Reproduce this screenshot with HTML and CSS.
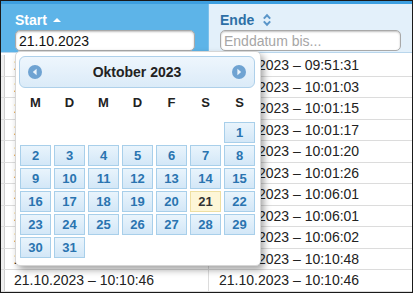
FILE: index.html
```html
<!DOCTYPE html>
<html lang="de">
<head>
<meta charset="utf-8">
<link rel="stylesheet" href="styles.css">
</head>
<body>
<div class="frame">
  <div class="thead">
    <div class="th th-sorted">
      <div class="th-title">Start <span class="sort-up"></span></div>
      <input class="filter" type="text" value="21.10.2023">
    </div>
    <div class="th th-plain">
      <div class="th-title">Ende
        <svg class="sort-both" width="10" height="14" viewBox="0 0 10 14"><path d="M1.8 5.6 L5 2.2 L8.2 5.6" fill="none" stroke="#5b96c9" stroke-width="2"/><path d="M1.8 8.4 L5 11.8 L8.2 8.4" fill="none" stroke="#5b96c9" stroke-width="2"/></svg>
      </div>
      <input class="filter" type="text" placeholder="Enddatum bis...">
    </div>
  </div>
  <div class="tbody">
    <div class="tr"><div class="td c1">21.10.2023 – 09:51:31</div><div class="td c2">21.10.2023 – 09:51:31</div></div>
    <div class="tr"><div class="td c1">21.10.2023 – 10:01:03</div><div class="td c2">21.10.2023 – 10:01:03</div></div>
    <div class="tr"><div class="td c1">21.10.2023 – 10:01:15</div><div class="td c2">21.10.2023 – 10:01:15</div></div>
    <div class="tr"><div class="td c1">21.10.2023 – 10:01:17</div><div class="td c2">21.10.2023 – 10:01:17</div></div>
    <div class="tr"><div class="td c1">21.10.2023 – 10:01:20</div><div class="td c2">21.10.2023 – 10:01:20</div></div>
    <div class="tr"><div class="td c1">21.10.2023 – 10:01:26</div><div class="td c2">21.10.2023 – 10:01:26</div></div>
    <div class="tr"><div class="td c1">21.10.2023 – 10:06:01</div><div class="td c2">21.10.2023 – 10:06:01</div></div>
    <div class="tr"><div class="td c1">21.10.2023 – 10:06:01</div><div class="td c2">21.10.2023 – 10:06:01</div></div>
    <div class="tr"><div class="td c1">21.10.2023 – 10:06:02</div><div class="td c2">21.10.2023 – 10:06:02</div></div>
    <div class="tr"><div class="td c1">21.10.2023 – 10:10:48</div><div class="td c2">21.10.2023 – 10:10:48</div></div>
    <div class="tr"><div class="td c1">21.10.2023 – 10:10:46</div><div class="td c2">21.10.2023 – 10:10:46</div></div>
  </div>

  <div class="datepicker">
    <div class="dp-header">
      <svg class="dp-nav" width="14" height="14" viewBox="0 0 14 14"><circle cx="7" cy="7" r="7" fill="#6fa3d2"/><path d="M8.6 3.8 L4.8 7 L8.6 10.2 Z" fill="#eaf3fb"/></svg>
      <div class="dp-title">Oktober 2023</div>
      <svg class="dp-nav" width="14" height="14" viewBox="0 0 14 14"><circle cx="7" cy="7" r="7" fill="#6fa3d2"/><path d="M5.4 3.8 L9.2 7 L5.4 10.2 Z" fill="#eaf3fb"/></svg>
    </div>
    <div class="dp-grid">
      <div class="dn">M</div><div class="dn">D</div><div class="dn">M</div><div class="dn">D</div><div class="dn">F</div><div class="dn">S</div><div class="dn">S</div>
      <div></div><div></div><div></div><div></div><div></div><div></div><div class="d">1</div>
      <div class="d">2</div><div class="d">3</div><div class="d">4</div><div class="d">5</div><div class="d">6</div><div class="d">7</div><div class="d">8</div>
      <div class="d">9</div><div class="d">10</div><div class="d">11</div><div class="d">12</div><div class="d">13</div><div class="d">14</div><div class="d">15</div>
      <div class="d">16</div><div class="d">17</div><div class="d">18</div><div class="d">19</div><div class="d">20</div><div class="d today">21</div><div class="d">22</div>
      <div class="d">23</div><div class="d">24</div><div class="d">25</div><div class="d">26</div><div class="d">27</div><div class="d">28</div><div class="d">29</div>
      <div class="d">30</div><div class="d">31</div>
    </div>
  </div>
</div>
</body>
</html>
```

FILE: styles.css
```css
* { box-sizing: border-box; }
html, body { margin: 0; padding: 0; background: #fff; }
body { font-family: "Liberation Sans", Arial, sans-serif; font-size: 14px; color: #222; }

.frame {
  position: relative;
  width: 413px;
  height: 293px;
  border: 1px solid #1a1a1a;
  overflow: hidden;
}

.thead {
  display: flex;
  height: 52px;
  border-top: 3px solid #3d9fe0;
  border-bottom: 1px solid #b9d6ec;
}
.th {
  padding: 7px 0 0 14px;
}
.th-sorted {
  width: 208px;
  background: #5db4e8;
  border-right: 1px solid #7cc1ec;
  color: #fff;
}
.th-plain {
  flex: 1;
  background: #e3f0fa;
  color: #2d6fa6;
  padding-left: 11px;
}
.th-title {
  font-weight: bold;
  font-size: 14px;
  line-height: 17px;
  height: 18px;
  display: flex;
  align-items: center;
  gap: 6px;
}
.sort-up {
  display: inline-block;
  width: 0;
  height: 0;
  border-left: 4px solid transparent;
  border-right: 4px solid transparent;
  border-bottom: 4px solid #fff;
  margin-top: -1px;
}
.sort-both { margin-left: 2px; }
.filter {
  display: block;
  margin-top: 1px;
  width: 180px;
  height: 21px;
  border: 1px solid #a9a9a9;
  border-radius: 5px;
  box-shadow: inset 0 1px 2px rgba(0,0,0,0.25);
  background: #fff;
  font-family: "Liberation Sans", Arial, sans-serif;
  font-size: 14px;
  color: #111;
  padding: 0 3px;
  outline: none;
}
.th-plain .filter { width: 181px; }
.filter::placeholder { color: #a6a6a6; }

.tbody { padding-top: 2px; }
.tr {
  display: flex;
  height: 21.5px;
  border-bottom: 1px solid #dcdcdc;
  line-height: 20px;
}
.td { white-space: nowrap; color: #222; }
.c1 {
  width: 208px;
  padding-left: 13px;
  border-right: 1px solid #dcdcdc;
  background: linear-gradient(to right, #efefef 0, #efefef 3px, #cfcfcf 3px, #cfcfcf 4px, transparent 4px);
}
.c2 { flex: 1; padding-left: 10px; }

.datepicker {
  position: absolute;
  left: 14px;
  top: 50px;
  width: 246px;
  height: 215px;
  background: #fff;
  border: 1px solid #d6d6d6;
  border-radius: 5px;
  padding: 4px 5px 0 3px;
  box-shadow: 3px 4px 7px rgba(0,0,0,0.35);
}
.dp-header {
  height: 32px;
  border: 1px solid #aed0ea;
  border-radius: 6px;
  background: linear-gradient(#eef6fd, #dbebf8);
  display: flex;
  align-items: center;
  justify-content: space-between;
  padding: 0 8px;
}
.dp-title {
  font-weight: bold;
  font-size: 14px;
  color: #222;
}
.dp-grid {
  display: grid;
  grid-template-columns: repeat(7, 31px);
  grid-template-rows: 30px;
  grid-auto-rows: 21px;
  column-gap: 3px;
  row-gap: 2px;
  margin: 2px 0 0 1px;
}
.dn {
  font-weight: bold;
  font-size: 13px;
  color: #222;
  text-align: center;
  line-height: 26px;
}
.d {
  border: 1px solid #a8cfea;
  background: linear-gradient(#e9f4fc, #d3e7f7);
  color: #2a74b0;
  font-weight: bold;
  font-size: 13px;
  text-align: center;
  line-height: 19px;
}
.d.today {
  background: #fdf6d7;
  border-color: #eedfa2;
  color: #333;
}
```
